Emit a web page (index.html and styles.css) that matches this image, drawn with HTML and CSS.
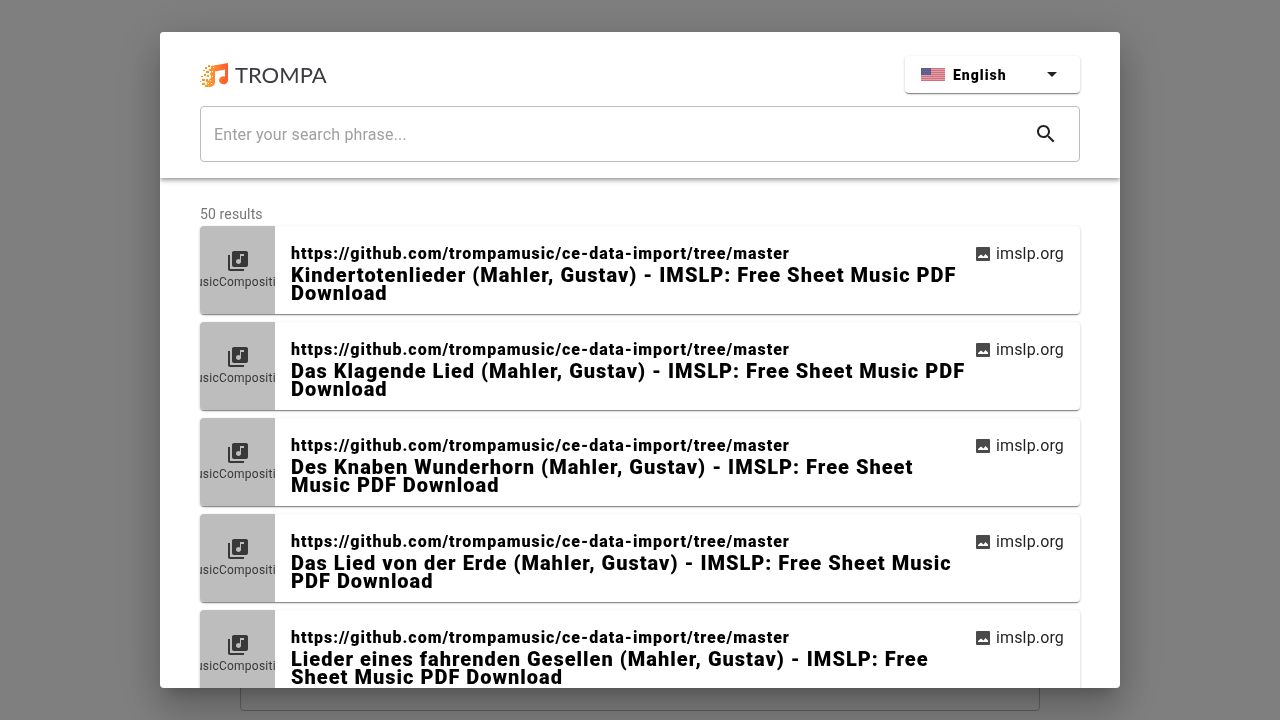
FILE: index.html
```html
<!DOCTYPE html>
<html lang="en">
<head>
<meta charset="utf-8">
<title>TROMPA search</title>
<link rel="stylesheet" href="styles.css">
</head>
<body>
<svg class="sprite" aria-hidden="true">
  <symbol id="library" viewBox="0 0 24 24"><path d="M20 2H8c-1.100 0-2 .9-2 2v12c0 1.100.9 2 2 2h12c1.100 0 2-.9 2-2V4c0-1.100-.9-2-2-2zm-2 5h-3v5.500c0 1.380-1.120 2.500-2.500 2.500S10 13.880 10 12.500s1.120-2.500 2.500-2.500c.57 0 1.080.19 1.500.51V5h4v2zM4 6H2v14c0 1.100.9 2 2 2h14v-2H4V6z"/></symbol>
  <symbol id="image" viewBox="0 0 14 14"><path fill-rule="evenodd" d="M1 0h12a1 1 0 0 1 1 1v12a1 1 0 0 1-1 1H1a1 1 0 0 1-1-1V1a1 1 0 0 1 1-1zM2 11h10V9.500L9.500 7 7.500 9.500 5 7.500 2 10z"/></symbol>
</svg>
<div class="page"><div class="page-panel"></div></div>
<div class="backdrop">
  <section class="dialog" role="dialog" aria-modal="true" aria-label="Search">
    <header class="header">
      <div class="topbar">
        <div class="logo">
          <svg class="logo-mark" viewBox="0 0 29 26" aria-hidden="true">
            <defs><linearGradient id="flame" x1="0" x2="1"><stop offset="0" stop-color="#ffa12a"/><stop offset="1" stop-color="#ff5a30"/></linearGradient></defs>
            <g fill="url(#flame)">
              <path d="M11 4 28 1v17.500a4.500 4 0 1 1-3-4V7.500L15 9.500V20a5 5 0 0 1-5 5c-3 0-4-2-3-4l3-5 1 1z"/>
            </g>
            <g fill="#ff9427">
              <path d="M5 5h2v2H5zM8 3h2v2H8zM9 7h3v2H9zM3 8h2v1H3zM6 9h3v2H6zM10 11h3v2h-3zM4 12h2v2H4zM1 14h2v1H1zM7 13h2v2H7zM2 17h3v2H2zM6 17h2v3H6zM0 19h1v1H0zM2 21h3v2H2zM5 23h3v2H5z"/>
            </g>
            <path fill="#fff" d="M13 5h1v1h-1zM12 9h1v1h-1zM12 14h1v1h-1zM10 18h1v1h-1zM8 21h1v1H8zM11 21h1v1h-1z"/>
          </svg>
          <span class="logo-name">TROMPA</span>
        </div>
        <div class="language">
          <svg class="flag" viewBox="0 0 24 13" aria-hidden="true">
            <path fill="#e3a0a9" d="M0 0h24v13H0z"/>
            <path stroke="#d0707d" d="M0 .5h24M0 2.500h24M0 4.500h24M0 6.500h24M0 8.500h24M0 10.500h24M0 12.500h24"/>
            <path fill="#5c5a8c" d="M0 0h10v7H0z"/>
            <path stroke="#74729c" stroke-dasharray="1 1" d="M1 1.500h8M2 3.500h7M1 5.500h8"/>
          </svg>
          <select class="language-select" aria-label="Language"><option>English</option></select>
          <svg class="arrow" viewBox="0 0 24 24" aria-hidden="true"><path d="M7 10l5 5 5-5z"/></svg>
        </div>
      </div>
      <form class="search">
        <input class="search-input" type="text" aria-label="Search phrase" placeholder="Enter your search phrase...">
        <button class="search-button" type="button" aria-label="Search"><svg viewBox="0 0 24 24" aria-hidden="true"><path d="M15.500 14h-.79l-.28-.27C15.410 12.590 16 11.110 16 9.500 16 5.910 13.090 3 9.500 3S3 5.910 3 9.500 5.910 16 9.500 16c1.610 0 3.090-.59 4.230-1.570l.27.28v.79l5 4.990L20.490 19l-4.990-5zm-6 0C7.010 14 5 11.990 5 9.500S7.010 5 9.500 5 14 7.010 14 9.500 11.990 14 9.500 14z"/></svg></button>
      </form>
    </header>
    <div class="results">
      <p class="count">50 results</p>
      <article class="card">
        <div class="kind"><svg class="kind-icon"><use href="#library"/></svg><span>MusicComposition</span></div>
        <div class="info"><p class="url">https://github.com/trompamusic/ce-data-import/tree/master</p><h2 class="title">Kindertotenlieder (Mahler, Gustav) - IMSLP: Free Sheet Music PDF Download</h2></div>
        <div class="source"><svg class="source-icon"><use href="#image"/></svg><span>imslp.org</span></div>
      </article>
      <article class="card">
        <div class="kind"><svg class="kind-icon"><use href="#library"/></svg><span>MusicComposition</span></div>
        <div class="info"><p class="url">https://github.com/trompamusic/ce-data-import/tree/master</p><h2 class="title">Das Klagende Lied (Mahler, Gustav) - IMSLP: Free Sheet Music PDF Download</h2></div>
        <div class="source"><svg class="source-icon"><use href="#image"/></svg><span>imslp.org</span></div>
      </article>
      <article class="card">
        <div class="kind"><svg class="kind-icon"><use href="#library"/></svg><span>MusicComposition</span></div>
        <div class="info"><p class="url">https://github.com/trompamusic/ce-data-import/tree/master</p><h2 class="title">Des Knaben Wunderhorn (Mahler, Gustav) - IMSLP: Free Sheet Music PDF Download</h2></div>
        <div class="source"><svg class="source-icon"><use href="#image"/></svg><span>imslp.org</span></div>
      </article>
      <article class="card">
        <div class="kind"><svg class="kind-icon"><use href="#library"/></svg><span>MusicComposition</span></div>
        <div class="info"><p class="url">https://github.com/trompamusic/ce-data-import/tree/master</p><h2 class="title">Das Lied von der Erde (Mahler, Gustav) - IMSLP: Free Sheet Music PDF Download</h2></div>
        <div class="source"><svg class="source-icon"><use href="#image"/></svg><span>imslp.org</span></div>
      </article>
      <article class="card">
        <div class="kind"><svg class="kind-icon"><use href="#library"/></svg><span>MusicComposition</span></div>
        <div class="info"><p class="url">https://github.com/trompamusic/ce-data-import/tree/master</p><h2 class="title">Lieder eines fahrenden Gesellen (Mahler, Gustav) - IMSLP: Free Sheet Music PDF Download</h2></div>
        <div class="source"><svg class="source-icon"><use href="#image"/></svg><span>imslp.org</span></div>
      </article>
    </div>
  </section>
</div>
</body>
</html>
```
FILE: styles.css
```css
* { box-sizing: border-box; }
body { margin: 0; font-family: Roboto, "Liberation Sans", sans-serif; color: rgba(0, 0, 0, .87); overflow: hidden; }
p, h2 { margin: 0; }
svg { display: block; fill: currentColor; }
.sprite { display: none; }
.page { display: flex; height: 100vh; padding: 40px 40px 9px; }
.page-panel { width: 100%; max-width: 800px; margin: 0 auto; border: 1px solid #bdbdbd; border-radius: 4px; }
.backdrop { position: fixed; inset: 0; display: flex; justify-content: center; padding: 32px; background: rgba(0, 0, 0, .5); }
.dialog { display: flex; flex-direction: column; width: 100%; max-width: 960px; overflow: hidden; background: #fff; border-radius: 4px; box-shadow: 0 11px 15px -7px rgba(0, 0, 0, .2), 0 24px 38px 3px rgba(0, 0, 0, .14), 0 9px 46px 8px rgba(0, 0, 0, .12); }
.header { flex: none; position: relative; padding: 24px 40px 16px; background: #fff; box-shadow: 0 2px 4px -1px rgba(0, 0, 0, .3), 0 3px 5px rgba(0, 0, 0, .2); }
.topbar { display: flex; justify-content: space-between; align-items: center; margin-bottom: 13px; }
.logo { display: flex; align-items: center; gap: 6px; }
.logo-mark { width: 29px; height: 26px; }
.logo-name { font: 400 22px/24px Lato, sans-serif; color: #3c3c40; }
.language { position: relative; width: 175px; height: 37px; border-radius: 4px; box-shadow: 0 1px 3px rgba(0, 0, 0, .2), 0 1px 1px rgba(0, 0, 0, .14), 0 2px 1px -1px rgba(0, 0, 0, .3); }
.language-select { width: 100%; height: 100%; padding: 0 40px 0 48px; border: 0; border-radius: 4px; background: transparent; appearance: none; font: 900 14px/20px Roboto, sans-serif; letter-spacing: 1px; color: #000; }
.flag { position: absolute; left: 16px; top: 12px; width: 24px; height: 13px; pointer-events: none; }
.arrow { position: absolute; right: 16px; top: 6px; width: 24px; height: 24px; pointer-events: none; }
.search { display: flex; align-items: center; height: 56px; padding: 0 21px 0 13px; border: 1px solid #bdbdbd; border-radius: 4px; }
.search-input { flex: 1; min-width: 0; height: 100%; padding: 0; border: 0; outline: 0; background: none; font: 400 16px/20px Roboto, sans-serif; letter-spacing: .00938em; color: inherit; }
.search-input::placeholder { color: #a0a0a0; opacity: 1; }
.search-button { width: 24px; height: 24px; padding: 0; border: 0; background: none; color: inherit; }
.results { display: flex; flex-direction: column; gap: 8px; flex: 1; min-height: 0; overflow: hidden; padding: 26px 40px; }
.count { flex: none; margin-bottom: -6px; font-size: 14px; line-height: 20px; letter-spacing: .00938em; color: #757575; }
.card { flex: none; display: flex; min-height: 88px; border-radius: 4px; background: #fff; box-shadow: 0 1px 3px rgba(0, 0, 0, .2), 0 1px 1px rgba(0, 0, 0, .14), 0 2px 1px -1px rgba(0, 0, 0, .3); }
.kind { flex: none; display: flex; flex-direction: column; align-items: center; justify-content: center; width: 75px; overflow: hidden; border-radius: 4px 0 0 4px; background: #bdbdbd; font-size: 12px; line-height: 18px; letter-spacing: .02em; color: #383838; }
.kind-icon { flex: none; width: 24px; height: 24px; }
.info { flex: 1; min-width: 0; padding: 16px 8px 12px 16px; color: #000; }
.url { font-size: 16px; font-weight: 900; line-height: 24px; letter-spacing: 1px; }
.title { font-size: 20px; font-weight: 900; line-height: 18px; letter-spacing: 1px; }
.source { flex: none; display: flex; gap: 6px; align-self: flex-start; align-items: center; padding: 16px 16px 0 0; font-size: 16px; line-height: 24px; letter-spacing: .00938em; }
.source-icon { width: 14px; height: 14px; color: #4a4a4a; }
```
